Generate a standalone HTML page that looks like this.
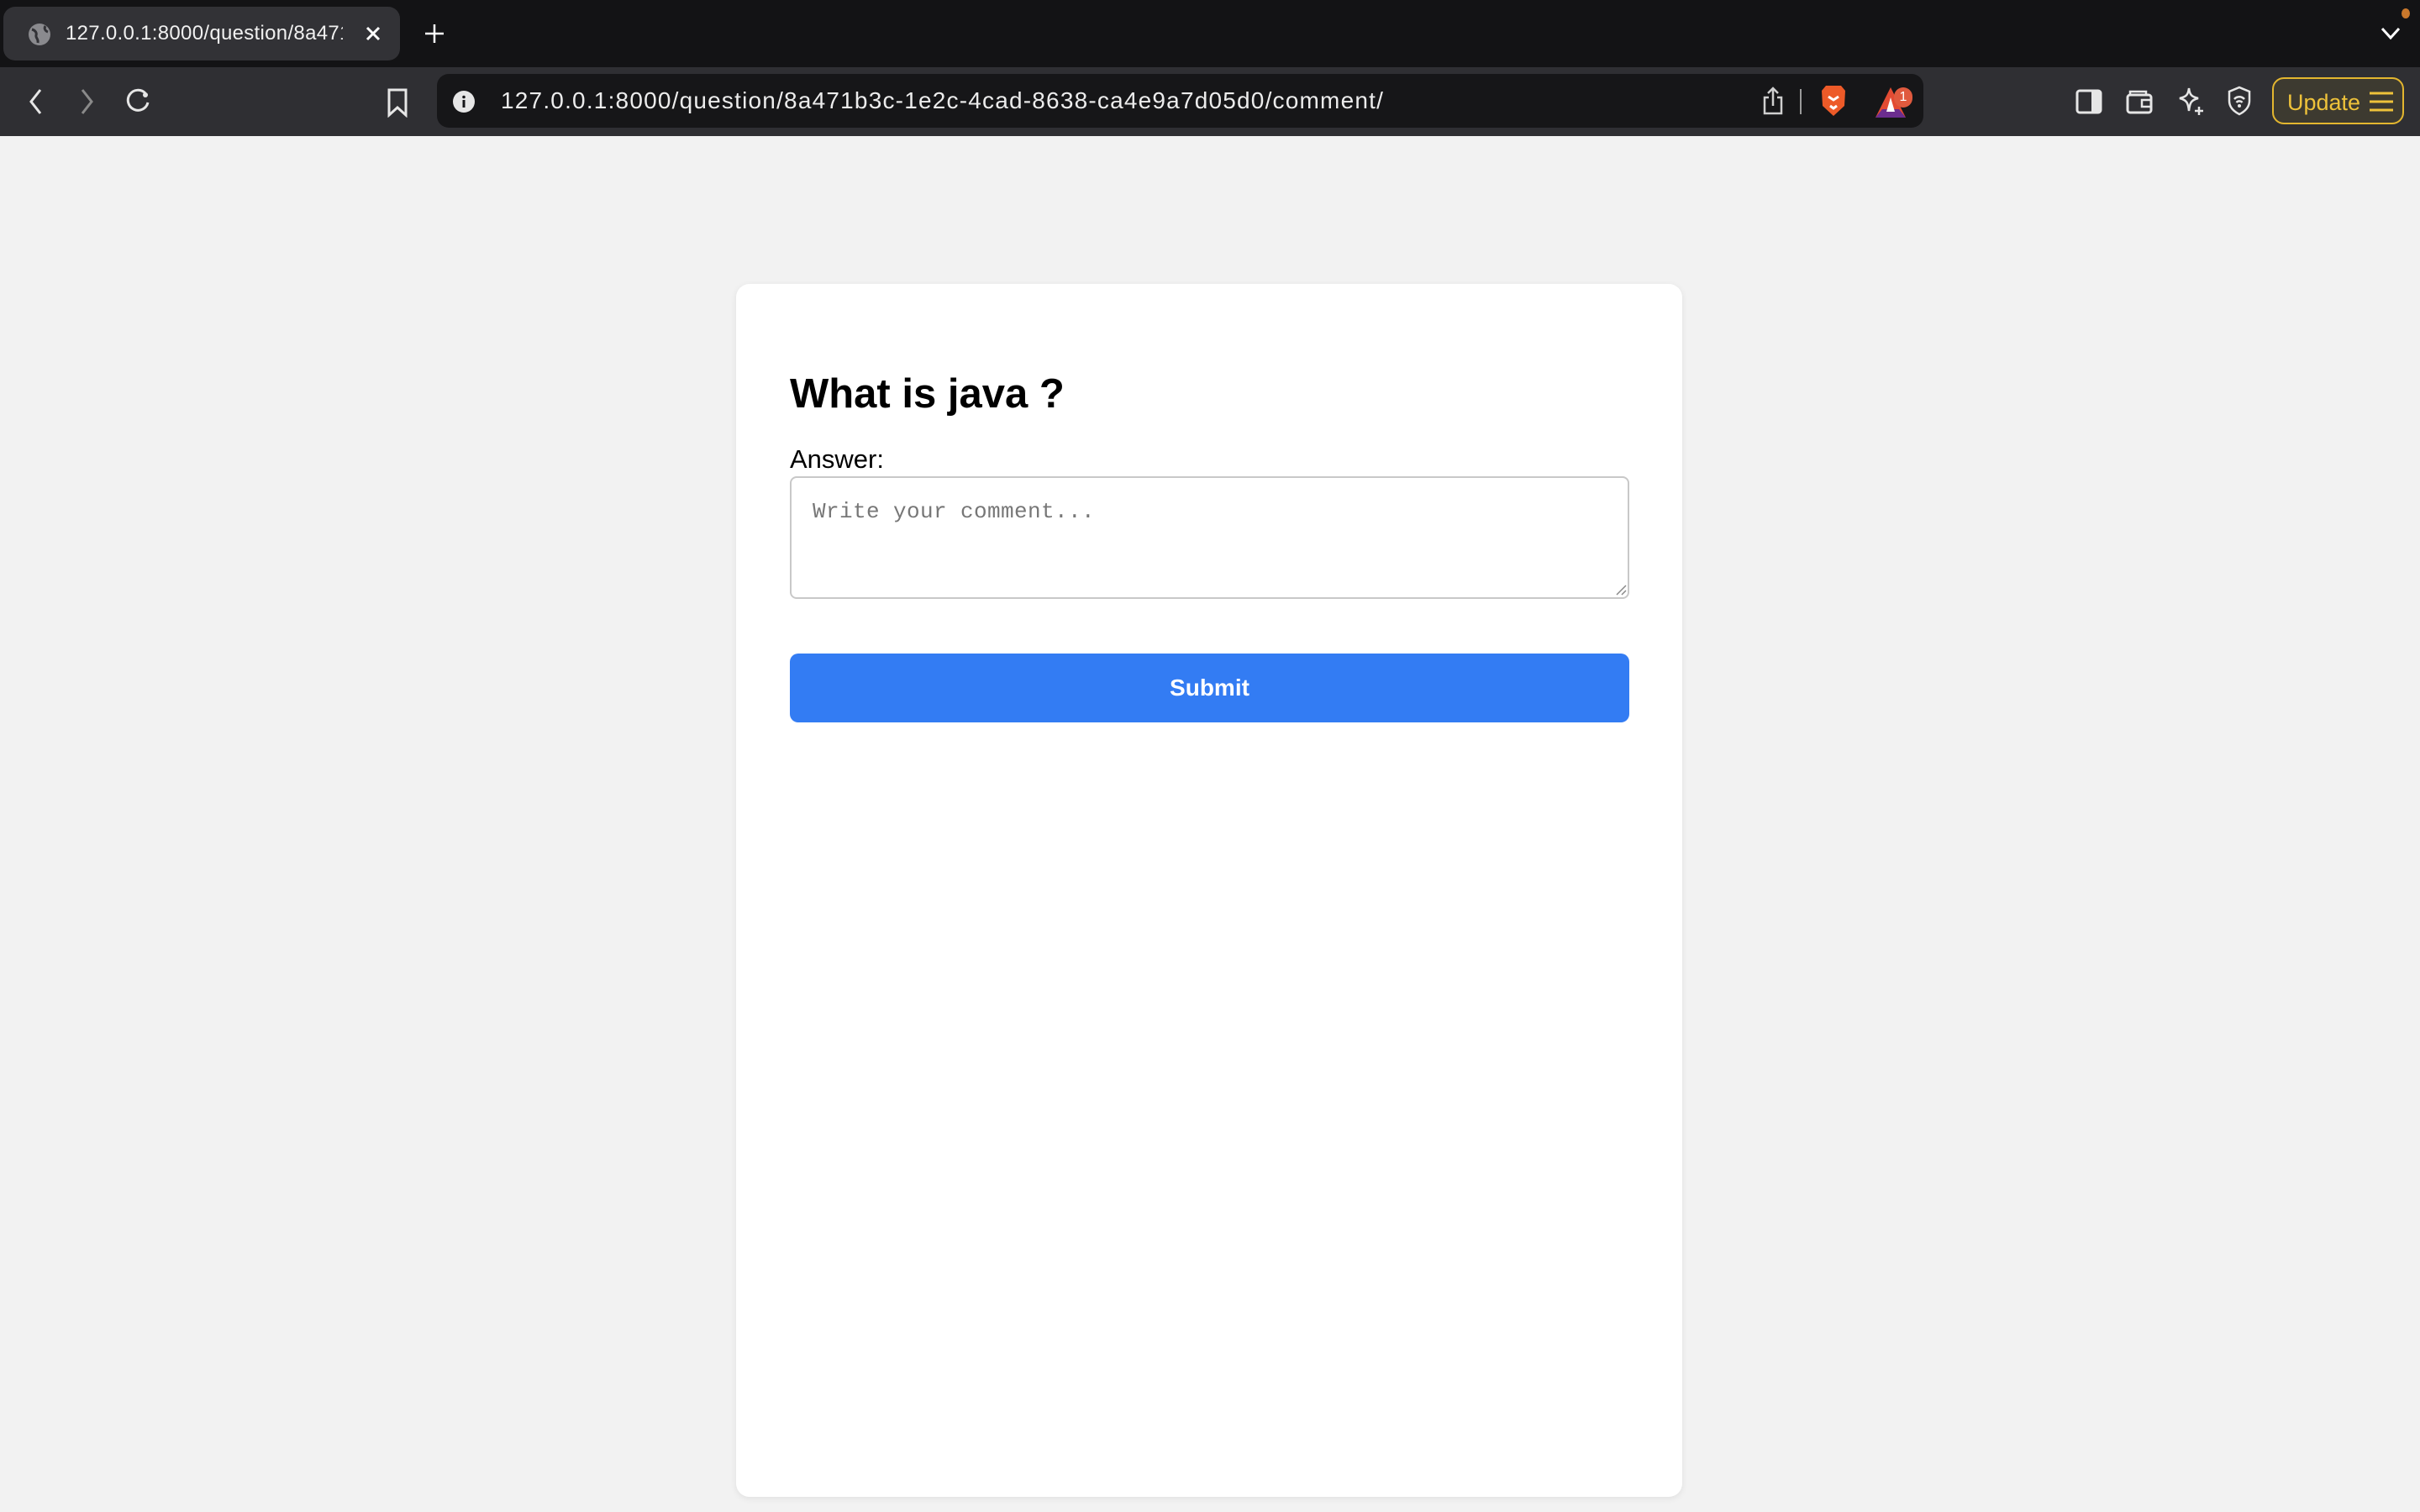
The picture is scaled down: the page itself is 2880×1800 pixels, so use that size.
<!DOCTYPE html>
<html><head><meta charset="utf-8"><style>
*{box-sizing:border-box;margin:0;padding:0}
html,body{width:2880px;height:1800px;overflow:hidden;background:#f2f2f2;font-family:"Liberation Sans",sans-serif}
.tabbar{position:absolute;left:0;top:0;width:2880px;height:80px;background:#131315}
.tab{position:absolute;left:4px;top:8px;width:472px;height:64px;background:#323236;border-radius:14px}
.tab .t{position:absolute;left:74px;top:18px;font-size:24px;color:#f0f0f0;white-space:nowrap;width:330px;overflow:hidden;letter-spacing:0.3px}
.toolbar{position:absolute;left:0;top:80px;width:2880px;height:82px;background:#2f2f33}
.url{position:absolute;left:520px;top:8px;width:1769px;height:64px;background:#161618;border-radius:14px}
.url .t{position:absolute;left:76px;top:16px;font-size:28px;color:#ececec;white-space:nowrap;letter-spacing:1.2px}
.upd{position:absolute;left:2704px;top:12px;width:157px;height:56px;border:2px solid #e3b62f;border-radius:14px;background:#3d3a30;color:#eec23a;font-size:27px;padding:13px 0 0 16px}
svg{position:absolute}
.card{position:absolute;left:876px;top:338px;width:1126px;height:1444px;background:#fff;border-radius:16px;box-shadow:0 2px 8px rgba(0,0,0,.08)}
h2{position:absolute;left:64px;top:103px;font-size:49px;font-weight:bold;color:#000}
.lbl{position:absolute;left:64px;top:191px;font-size:31px;color:#000}
.ta{position:absolute;left:64px;top:229px;width:999px;height:146px;border:2px solid #c8c8c8;border-radius:8px}
.ta span{position:absolute;left:25px;top:25px;font-family:"Liberation Mono",monospace;font-size:26px;color:#777;letter-spacing:0.4px}
.btn{position:absolute;left:64px;top:440px;width:999px;height:82px;background:#337cf3;border-radius:10px;color:#fff;font-weight:bold;font-size:28px;text-align:center;line-height:82px}
</style></head><body>
<div class="tabbar">
 <div class="tab">
  <svg style="left:28px;top:18px" width="30" height="30" viewBox="0 0 30 30"><circle cx="15" cy="15" r="13" fill="#8a8a8e"/><path d="M6 9c4 1 6 4 5 7s3 4 2 9M22 5c-2 3 0 6 3 7" stroke="#323236" stroke-width="3" fill="none"/></svg>
  <div class="t">127.0.0.1:8000/question/8a471b3c</div>
  <svg style="left:430px;top:22px" width="20" height="20" viewBox="0 0 20 20"><path d="M3 3L17 17M17 3L3 17" stroke="#fff" stroke-width="3"/></svg>
 </div>
 <svg style="left:505px;top:28px" width="24" height="24" viewBox="0 0 24 24"><path d="M12 1V23M1 12H23" stroke="#fff" stroke-width="2.5"/></svg>
 <svg style="left:2833px;top:32px" width="24" height="16" viewBox="0 0 24 16"><path d="M2 2L12 13L22 2" stroke="#fff" stroke-width="3" fill="none"/></svg>
 <div style="position:absolute;left:2858px;top:10px;width:10px;height:12px;border-radius:50%;background:#c9782c"></div>
</div>
<div class="toolbar">
 <svg style="left:32px;top:24px" width="22" height="34" viewBox="0 0 22 34"><path d="M16 3L5 17L16 31" stroke="#e6e6e6" stroke-width="3" fill="none"/></svg>
 <svg style="left:92px;top:24px" width="22" height="34" viewBox="0 0 22 34"><path d="M6 3L17 17L6 31" stroke="#8a8a8a" stroke-width="3" fill="none"/></svg>
 <svg style="left:147px;top:22px" width="34" height="36" viewBox="0 0 34 36"><path d="M26 9A12 12 0 1 0 29 20" stroke="#e6e6e6" stroke-width="3" fill="none"/><circle cx="26" cy="11" r="3" fill="#e6e6e6"/></svg>
 <svg style="left:460px;top:24px" width="26" height="36" viewBox="0 0 26 36"><path d="M3 3H23V33L13 24L3 33Z" stroke="#e6e6e6" stroke-width="3" fill="none"/></svg>
 <div class="url">
  <svg style="left:19px;top:20px" width="26" height="26" viewBox="0 0 26 26"><circle cx="13" cy="13" r="13" fill="#e6e6e6"/><rect x="11.5" y="11" width="3" height="9" fill="#161618"/><circle cx="13" cy="7.5" r="1.8" fill="#161618"/></svg>
  <div class="t">127.0.0.1:8000/question/8a471b3c-1e2c-4cad-8638-ca4e9a7d05d0/comment/</div>
  <svg style="left:1577px;top:14px" width="26" height="36" viewBox="0 0 26 36"><path d="M8 14H3V33H23V14H18M13 24V3M7 9L13 3L19 9" stroke="#cfcfcf" stroke-width="2.5" fill="none"/></svg>
  <div style="position:absolute;left:1622px;top:18px;width:2px;height:30px;background:#9a9a9a"></div>
  <svg style="left:1645px;top:12px" width="34" height="40" viewBox="0 0 34 40"><path d="M8 2H26L31 8L30 26L17 38L4 26L3 8Z" fill="#ed5a28"/><path d="M11 15L17 19L23 15M13 26L17 29L21 26" stroke="#fff" stroke-width="3" fill="none"/></svg>
  <svg style="left:1710px;top:14px" width="40" height="40" viewBox="0 0 40 40"><path d="M20 2L38 38H2Z" fill="#e34b33"/><path d="M2 38H38L30 28H10Z" fill="#6b2d8f"/><path d="M20 14L25 31H15Z" fill="#fff"/></svg>
  <div style="position:absolute;left:1734px;top:16px;width:22px;height:24px;border-radius:11px;background:#e05a3e;color:#fff;font-size:16px;text-align:center;line-height:24px">1</div>
 </div>
 <svg style="left:2470px;top:26px" width="32" height="30" viewBox="0 0 32 30"><rect x="2" y="2" width="28" height="26" rx="3" stroke="#e6e6e6" stroke-width="3" fill="none"/><rect x="19" y="2" width="11" height="26" fill="#e6e6e6"/></svg>
 <svg style="left:2530px;top:26px" width="32" height="30" viewBox="0 0 32 30"><path d="M5 6V3H24V6" stroke="#e6e6e6" stroke-width="2.5" fill="none"/><rect x="2" y="7" width="28" height="21" rx="3" stroke="#e6e6e6" stroke-width="3" fill="none"/><rect x="19" y="13" width="11" height="8" stroke="#e6e6e6" stroke-width="2.5" fill="none"/></svg>
 <svg style="left:2590px;top:22px" width="34" height="36" viewBox="0 0 34 36"><path d="M15 3C16 11 18 13 26 15C18 17 16 20 15 30C14 20 12 17 4 15C12 13 14 11 15 3Z" stroke="#e6e6e6" stroke-width="2.5" fill="none"/><path d="M27 25V35M22 30H32" stroke="#e6e6e6" stroke-width="2.5"/></svg>
 <svg style="left:2650px;top:22px" width="30" height="36" viewBox="0 0 30 36"><path d="M15 2L27 7V18C27 26 21 31 15 34C9 31 3 26 3 18V7Z" stroke="#e6e6e6" stroke-width="2.5" fill="none"/><path d="M9 16A8 8 0 0 1 21 16M11.5 20A4.5 4.5 0 0 1 18.5 20" stroke="#e6e6e6" stroke-width="2.5" fill="none"/><circle cx="15" cy="24" r="2" fill="#e6e6e6"/></svg>
 <div class="upd">Update</div>
 <svg style="left:2818px;top:28px" width="32" height="26" viewBox="0 0 32 26"><path d="M2 3H30M2 13H30M2 23H30" stroke="#eec23a" stroke-width="3"/></svg>
</div>
<div class="card">
 <h2>What is java ?</h2>
 <div class="lbl">Answer:</div>
 <div class="ta"><span>Write your comment...</span>
  <svg style="left:980px;top:126px" width="14" height="14" viewBox="0 0 14 14"><path d="M13 2L2 13M13 8L8 13" stroke="#888" stroke-width="1.5"/></svg>
 </div>
 <div class="btn">Submit</div>
</div>
</body></html>
